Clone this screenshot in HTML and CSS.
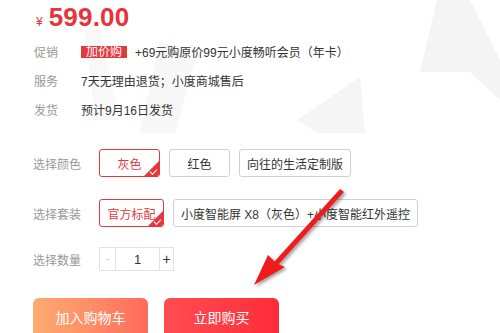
FILE: index.html
```html
<!DOCTYPE html>
<html>
<head>
<meta charset="utf-8">
<link rel="stylesheet" href="styles.css">
</head>
<body>
<div class="page">
  <svg class="watermark" width="500" height="333" viewBox="0 0 500 333">
    <polygon points="140,133 175,133 195,60 160,40" fill="#f7f7f7"/>
    <polygon points="297,120 360,77 365,133 318,133" fill="#f5f5f5"/>
    <polygon points="420,72 437,0 470,0 500,60 500,100 470,72" fill="#f4f4f4"/>
    <polygon points="85,30 100,30 120,120 95,120" fill="#f8f8f8"/>
  </svg>

  <div class="price"><span class="yen">¥</span><span class="amount">599.00</span></div>

  <div class="info">
    <div class="info-row"><span class="info-label">促销</span><span class="tag">加价购</span><span class="info-value">+69元购原价99元小度畅听会员（年卡）</span></div>
    <div class="info-row"><span class="info-label">服务</span><span class="info-value">7天无理由退货；小度商城售后</span></div>
    <div class="info-row"><span class="info-label">发货</span><span class="info-value">预计9月16日发货</span></div>
  </div>

  <div class="choose choose-color">
    <span class="choose-label">选择颜色</span>
    <div class="opts">
      <span class="opt selected">灰色<i class="check"></i></span>
      <span class="opt">红色</span>
      <span class="opt">向往的生活定制版</span>
    </div>
  </div>

  <div class="choose choose-set">
    <span class="choose-label">选择套装</span>
    <div class="opts">
      <span class="opt selected">官方标配<i class="check"></i></span>
      <span class="opt">小度智能屏 X8（灰色）+小度智能红外遥控</span>
    </div>
  </div>

  <div class="choose choose-qty">
    <span class="choose-label">选择数量</span>
    <div class="qty">
      <span class="qty-minus">-</span>
      <span class="qty-num">1</span>
      <span class="qty-plus">+</span>
    </div>
  </div>

  <div class="actions">
    <span class="btn btn-cart">加入购物车</span>
    <span class="btn btn-buy">立即购买</span>
  </div>

  <svg class="arrow" width="500" height="333" viewBox="0 0 500 333">
    <defs>
      <filter id="sh" x="-20%" y="-20%" width="140%" height="140%">
        <feDropShadow dx="2" dy="2" stdDeviation="1.5" flood-color="#000" flood-opacity="0.35"/>
      </filter>
    </defs>
    <g filter="url(#sh)" fill="#ee1c1c">
      <polygon points="340,189 344,192 278,265 274,262"/>
      <polygon points="254,285 268,255 276,263 285,267"/>
    </g>
  </svg>
</div>
</body>
</html>
```

FILE: styles.css
```css
* { box-sizing: border-box; }
html, body { margin: 0; padding: 0; background: #fff; }
body {
  font-family: "Liberation Sans", "Noto Sans CJK SC", sans-serif;
  font-size: 12px;
  color: #333;
}
.page {
  position: relative;
  width: 500px;
  height: 333px;
  overflow: hidden;
  padding-left: 33px;
}
.watermark {
  position: absolute;
  left: 0;
  top: 0;
  z-index: 0;
}
.arrow {
  position: absolute;
  left: 0;
  top: 0;
  z-index: 5;
}
.price, .info, .choose, .actions { position: relative; z-index: 1; }

.price {
  height: 37px;
  display: flex;
  align-items: center;
  padding-left: 3px;
  padding-bottom: 2px;
  color: #e8323c;
}
.yen { font-size: 12px; margin-right: 6px; margin-top: 8px; }
.amount { font-size: 26px; font-weight: bold; letter-spacing: 0.2px; }

.info-row {
  height: 29px;
  display: flex;
  align-items: center;
  padding-left: 1px;
}
.info-label { width: 47px; color: #999; }
.info-value { color: #333; }
.tag {
  background: #e4393c;
  color: #fff;
  height: 12px;
  line-height: 12px;
  padding: 0 5px;
  margin-right: 8px;
  font-size: 12px;
}

.choose {
  display: flex;
  align-items: center;
}
.choose-label { width: 66px; color: #999; }
.choose-color { margin-top: 25px; height: 28px; }
.choose-set { margin-top: 22px; height: 28px; }
.choose-qty { margin-top: 20px; height: 24px; }

.opts { display: flex; gap: 9px; }
.opt {
  position: relative;
  height: 28px;
  min-width: 61px;
  padding: 0 7px;
  border: 1px solid #d0d0d0;
  border-radius: 3px;
  display: flex;
  align-items: center;
  justify-content: center;
  color: #333;
  overflow: hidden;
}
.opt.selected {
  border-color: #e4393c;
  color: #e4393c;
}
.choose-set .opt.selected { min-width: 65px; padding: 0 5px; }
.check {
  position: absolute;
  right: 0;
  bottom: 0;
  width: 0;
  height: 0;
  border-style: solid;
  border-width: 0 0 15px 15px;
  border-color: transparent transparent #e4393c transparent;
}
.check::after {
  content: "";
  position: absolute;
  right: 2px;
  bottom: -12px;
  width: 6px;
  height: 3px;
  border-left: 1.5px solid #fff;
  border-bottom: 1.5px solid #fff;
  transform: rotate(-45deg);
}

.qty {
  display: flex;
  height: 24px;
  border: 1px solid #e3e3e3;
}
.qty span {
  display: flex;
  align-items: center;
  justify-content: center;
  height: 22px;
}
.qty-minus { width: 16px; color: #ccc; border-right: 1px solid #e3e3e3; }
.qty-num { width: 43px; color: #333; font-size: 13px; }
.qty-plus { width: 14px; color: #333; border-left: 1px solid #e3e3e3; font-size: 14px; }

.actions {
  margin-top: 27px;
  display: flex;
  gap: 16px;
}
.btn {
  width: 115px;
  height: 40px;
  border-radius: 6px;
  color: #fff;
  font-size: 14px;
  display: flex;
  align-items: center;
  justify-content: center;
  padding-bottom: 2px;
}
.btn-cart { background: linear-gradient(90deg, #fdac70 0%, #ff8a65 55%, #ff6a5c 100%); }
.btn-buy { background: linear-gradient(90deg, #ff4d52 0%, #ff3a44 60%, #ff2b38 100%); }
```
